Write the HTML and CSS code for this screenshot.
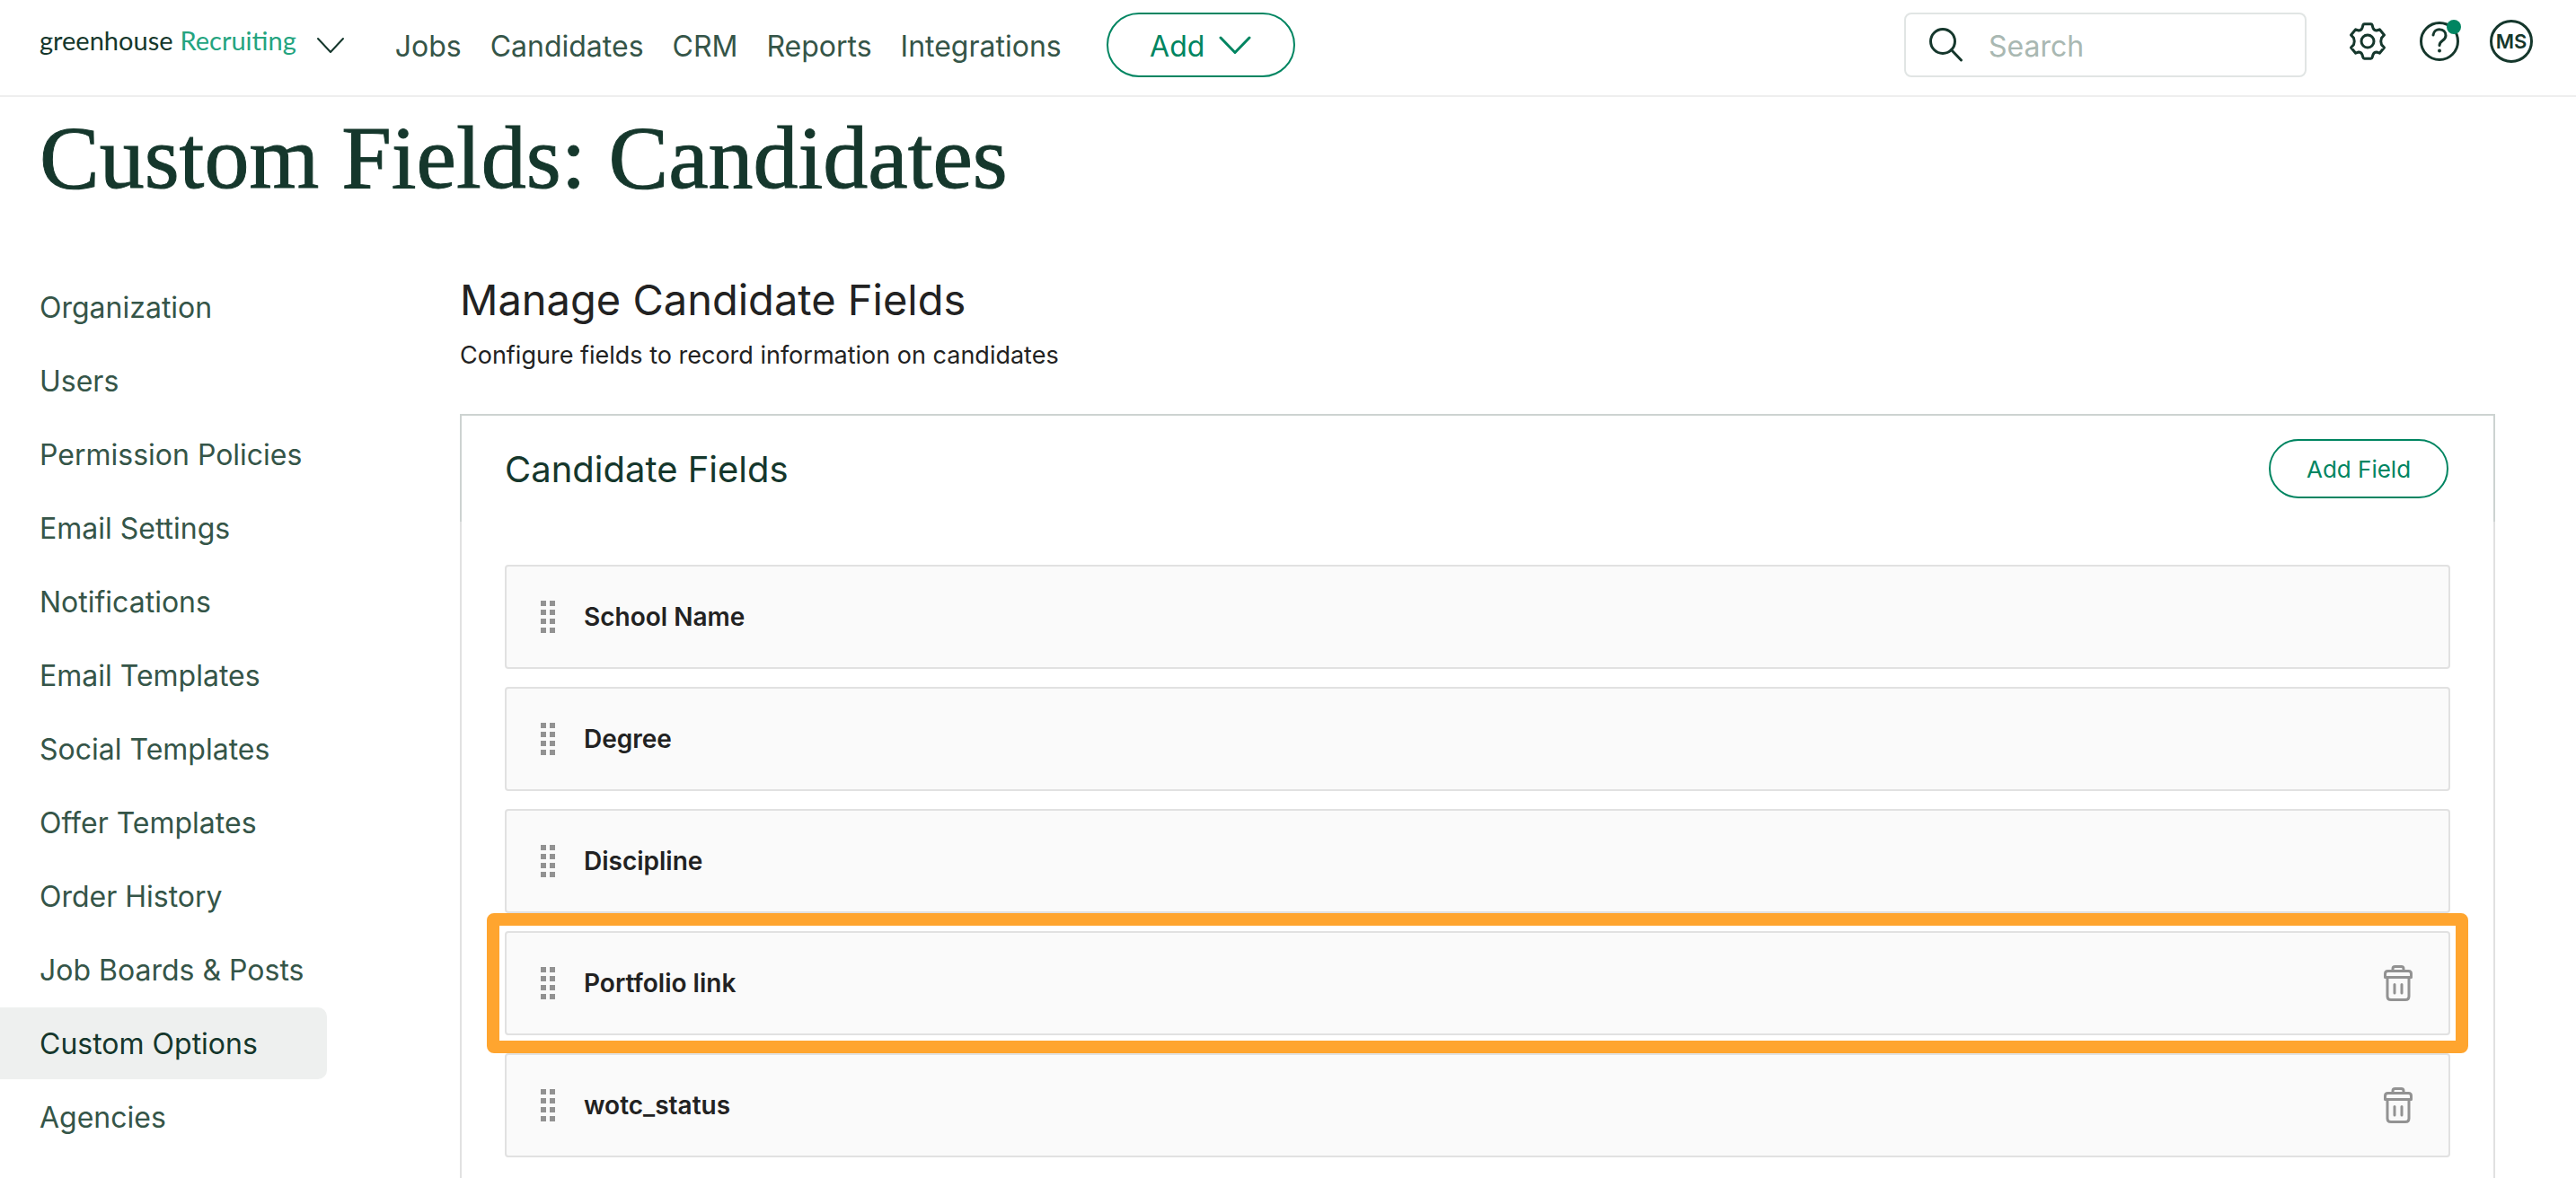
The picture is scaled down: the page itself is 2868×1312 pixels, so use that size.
FILE: index.html
```
<!DOCTYPE html>
<html lang="en">
<head>
  <meta charset="UTF-8" />
  <title>Custom Fields: Candidates</title>
  <link rel="stylesheet" href="styles.css">
</head>
<body>
  <header class="topbar">
    <a class="brand" href="#">
      <span class="brand-name">greenhouse</span>
      <span class="brand-product">Recruiting</span>
    </a>
    <button class="brand-toggle" type="button" aria-label="Switch product">
      <svg width="32" height="20" viewBox="0 0 32 20"><path d="M2 3 L16 18 L30 3" /></svg>
    </button>
    <nav class="main-nav">
      <a href="#">Jobs</a>
      <a href="#">Candidates</a>
      <a href="#">CRM</a>
      <a href="#">Reports</a>
      <a href="#">Integrations</a>
    </nav>
    <button class="btn btn-add" type="button">
      Add
      <svg width="36" height="22" viewBox="0 0 36 22"><path d="M2 2 L18 18.500 L34 2" /></svg>
    </button>
    <label class="search">
      <svg width="40" height="40" viewBox="0 0 40 40"><circle cx="17" cy="16" r="13.500" /><path d="M26.500 25.500 L37.500 37" /></svg>
      <input type="search" placeholder="Search" aria-label="Search">
    </label>
    <div class="tools">
      <button class="tool" type="button" aria-label="Settings">
        <svg width="48" height="48" viewBox="0 0 48 48">
          <path d="M20.300 4.800 H27.700 Q28.800 4.800 29.100 6 L30 9 Q31 12 34 12 L37.300 10.800 L42.500 17 L39.500 20.300 Q38 24 39.500 27.700 L42.500 31 L37.300 37.200 L34 36 Q31 36 30 39 L29.100 42 Q28.800 43.200 27.700 43.200 H20.300 Q19.200 43.200 18.900 42 L18 39 Q17 36 14 36 L10.700 37.200 L5.500 31 L8.500 27.700 Q10 24 8.500 20.300 L5.500 17 L10.700 10.800 L14 12 Q17 12 18 9 L18.900 6 Q19.200 4.800 20.300 4.800 Z" />
          <circle cx="24" cy="24" r="7" />
        </svg>
      </button>
      <button class="tool" type="button" aria-label="Help">
        <svg width="48" height="48" viewBox="0 0 48 48">
          <circle cx="24" cy="24" r="20.500" />
          <path d="M17 17 C18 8.500 31 9 31 17.500 C31 24 24 22.500 24 28.500" />
          <circle class="fill" cx="24" cy="34.500" r="2" />
        </svg>
        <span class="dot"></span>
      </button>
      <button class="avatar" type="button">MS</button>
    </div>
  </header>

  <h1 class="page-title">Custom Fields: Candidates</h1>

  <div class="layout">
    <nav class="sidebar">
      <a href="#">Organization</a>
      <a href="#">Users</a>
      <a href="#">Permission Policies</a>
      <a href="#">Email Settings</a>
      <a href="#">Notifications</a>
      <a href="#">Email Templates</a>
      <a href="#">Social Templates</a>
      <a href="#">Offer Templates</a>
      <a href="#">Order History</a>
      <a href="#">Job Boards &amp; Posts</a>
      <a class="active" href="#">Custom Options</a>
      <a href="#">Agencies</a>
    </nav>

    <main class="content">
      <h2>Manage Candidate Fields</h2>
      <p class="intro">Configure fields to record information on candidates</p>

      <section class="panel">
        <div class="panel-head">
          <h3>Candidate Fields</h3>
          <button class="btn btn-field" type="button">Add Field</button>
        </div>
        <ul class="fields">
          <li class="field"><span class="grip"></span>School Name</li>
          <li class="field"><span class="grip"></span>Degree</li>
          <li class="field"><span class="grip"></span>Discipline</li>
          <li class="field highlight">
            <span class="grip"></span>Portfolio link
            <button class="trash" type="button" aria-label="Delete Portfolio link">
              <svg width="32" height="40" viewBox="0 0 32 40"><path d="M10 6 V4 Q10 1.500 12.500 1.500 H19.500 Q22 1.500 22 4 V6 M1.500 13.500 V9.500 Q1.500 6.500 4.500 6.500 H27.500 Q30.500 6.500 30.500 9.500 V13.500 Z M4 14 V34.500 Q4 38.500 8 38.500 H24 Q28 38.500 28 34.500 V14" /><path d="M12 21.500 V31 M20 21.500 V31" /></svg>
            </button>
          </li>
          <li class="field">
            <span class="grip"></span>wotc_status
            <button class="trash" type="button" aria-label="Delete wotc_status">
              <svg width="32" height="40" viewBox="0 0 32 40"><path d="M10 6 V4 Q10 1.500 12.500 1.500 H19.500 Q22 1.500 22 4 V6 M1.500 13.500 V9.500 Q1.500 6.500 4.500 6.500 H27.500 Q30.500 6.500 30.500 9.500 V13.500 Z M4 14 V34.500 Q4 38.500 8 38.500 H24 Q28 38.500 28 34.500 V14" /><path d="M12 21.500 V31 M20 21.500 V31" /></svg>
            </button>
          </li>
        </ul>
      </section>
    </main>
  </div>
</body>
</html>
```
FILE: styles.css
```
* {
  box-sizing: border-box;
}
body {
  margin: 0;
  background: #fff;
  color: #222;
  font-family: Inter, "Liberation Sans", sans-serif;
  font-size: 28px;
}
a {
  color: inherit;
  text-decoration: none;
}
button {
  font: inherit;
  padding: 0;
  border: none;
  background: none;
  cursor: pointer;
}
svg {
  fill: none;
  stroke: currentColor;
  stroke-width: 3;
  stroke-linecap: round;
  stroke-linejoin: round;
}
h1, h2, h3, p, ul {
  margin: 0;
  padding: 0;
}

/* top bar */
.topbar {
  display: flex;
  align-items: center;
  height: 108px;
  padding: 0 48px 6px 44px;
  border-bottom: 2px solid #eee;
  color: #15372c;
}
.brand {
  display: flex;
  gap: 8px;
  padding-bottom: 12px;
  font-family: Lato, sans-serif;
  font-size: 29px;
}
.brand-product {
  color: #24a47f;
}
.brand-toggle {
  margin: 0 56px 0 22px;
  color: #15372c;
}
.brand-toggle svg {
  stroke-width: 2;
}
.main-nav {
  display: flex;
  gap: 32px;
  padding-top: 2px;
  color: #355548;
  font-size: 32px;
}
.btn {
  display: flex;
  align-items: center;
  justify-content: center;
  border: 2px solid #008561;
  border-radius: 36px;
  color: #008561;
}
.btn-add {
  gap: 16px;
  width: 210px;
  height: 72px;
  margin-left: 50px;
  padding-top: 2px;
  font-size: 32px;
}
.search {
  display: flex;
  align-items: center;
  gap: 28px;
  width: 448px;
  height: 72px;
  margin-left: auto;
  padding: 0 24px;
  border: 2px solid #e1e5e4;
  border-radius: 8px;
}
.search svg {
  flex: none;
}
.search input {
  flex: 1;
  min-width: 0;
  padding: 2px 0 0;
  border: none;
  outline: none;
  background: none;
  font: inherit;
  font-size: 32px;
}
.search input::placeholder {
  color: #a9b8b2;
}
.tools {
  display: flex;
  align-items: center;
  gap: 32px;
  margin-left: 44px;
  padding-bottom: 8px;
}
.tool {
  position: relative;
  display: flex;
  color: #15372c;
}
.tool .fill {
  fill: currentColor;
  stroke: none;
}
.dot {
  position: absolute;
  top: 0;
  right: 0;
  width: 16px;
  height: 16px;
  border-radius: 50%;
  background: #008561;
}
.avatar {
  width: 48px;
  height: 48px;
  border: 3px solid #15372c;
  border-radius: 50%;
  color: #15372c;
  font-size: 22px;
  font-weight: 600;
}

.page-title {
  padding: 10px 44px 14px;
  color: #15372c;
  font-family: "Liberation Serif", serif;
  font-size: 100px;
  font-weight: 400;
  line-height: 116px;
  -webkit-text-stroke: 1px #15372c;
}

.layout {
  display: flex;
  align-items: flex-start;
}

/* left menu */
.sidebar {
  display: flex;
  flex-direction: column;
  gap: 2px;
  width: 364px;
  padding-top: 54px;
  color: #355548;
  font-size: 32px;
}
.sidebar a {
  padding: 2px 44px 0;
  border-radius: 0 10px 10px 0;
  line-height: 78px;
  white-space: nowrap;
}
.sidebar .active {
  background: #eef0ef;
  color: #15372c;
}

/* main column */
.content {
  flex: 1;
  padding: 56px 90px 0 148px;
}
h2 {
  font-size: 47px;
  font-weight: 400;
  line-height: 60px;
}
.intro {
  margin-top: 12px;
  font-size: 27px;
  line-height: 40px;
}
.panel {
  margin-top: 45px;
  border: 2px solid #e1e1e1;
  border-top: none;
}
.panel-head {
  display: flex;
  align-items: center;
  justify-content: space-between;
  height: 120px;
  margin: 0 -2px;
  padding: 0 50px 0 48px;
  border: 2px solid #cdd3d1;
  border-bottom: none;
}
h3 {
  color: #15372c;
  font-size: 40px;
  font-weight: 400;
}
.btn-field {
  width: 200px;
  height: 66px;
  font-size: 26px;
}
.fields {
  display: flex;
  flex-direction: column;
  gap: 20px;
  padding: 48px 48px 60px;
  list-style: none;
}
.field {
  position: relative;
  display: flex;
  align-items: center;
  height: 116px;
  padding: 0 40px 0 38px;
  border: 2px solid #e1e1e1;
  border-radius: 4px;
  background: #fafafa;
  font-size: 28px;
  font-weight: 600;
}
/* orange frame drawn over the neighbouring rows */
.highlight::after {
  content: "";
  position: absolute;
  inset: -22px;
  z-index: 1;
  border: 14px solid #ffa52f;
  border-radius: 8px;
  pointer-events: none;
}
.grip {
  width: 16px;
  height: 36px;
  margin-right: 32px;
  background: repeating-linear-gradient(#fafafa00 0 6px, #fafafa 6px 10px), linear-gradient(90deg, #929292 6px, #fafafa 6px 10px, #929292 10px);
}
.trash {
  display: flex;
  margin-left: auto;
  color: #929292;
}
```
